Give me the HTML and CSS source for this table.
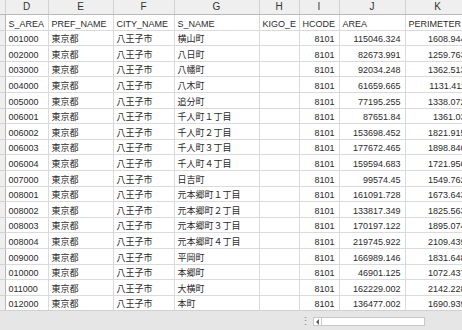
FILE: index.html
```html
<!DOCTYPE html>
<html lang="ja">
<head>
<meta charset="utf-8">
<link rel="stylesheet" href="styles.css">
</head>
<body>
<div class="sheet">
  <div class="grid-wrap">
    <table class="grid">
      <colgroup>
        <col class="c-rh"><col class="c-d"><col class="c-e"><col class="c-f"><col class="c-g"><col class="c-h"><col class="c-i"><col class="c-j"><col class="c-k">
      </colgroup>
      <thead>
        <tr class="colhdr"><th></th><th>D</th><th>E</th><th>F</th><th>G</th><th>H</th><th>I</th><th>J</th><th>K</th></tr>
      </thead>
      <tbody>
        <tr><th></th><td>S_AREA</td><td>PREF_NAME</td><td>CITY_NAME</td><td>S_NAME</td><td>KIGO_E</td><td>HCODE</td><td>AREA</td><td>PERIMETER</td></tr>
        <tr><th></th><td>001000</td><td>東京都</td><td>八王子市</td><td>横山町</td><td></td><td class="n">8101</td><td class="n">115046.324</td><td class="n">1608.944</td></tr>
        <tr><th></th><td>002000</td><td>東京都</td><td>八王子市</td><td>八日町</td><td></td><td class="n">8101</td><td class="n">82673.991</td><td class="n">1259.763</td></tr>
        <tr><th></th><td>003000</td><td>東京都</td><td>八王子市</td><td>八幡町</td><td></td><td class="n">8101</td><td class="n">92034.248</td><td class="n">1362.513</td></tr>
        <tr><th></th><td>004000</td><td>東京都</td><td>八王子市</td><td>八木町</td><td></td><td class="n">8101</td><td class="n">61659.665</td><td class="n">1131.411</td></tr>
        <tr><th></th><td>005000</td><td>東京都</td><td>八王子市</td><td>追分町</td><td></td><td class="n">8101</td><td class="n">77195.255</td><td class="n">1338.072</td></tr>
        <tr><th></th><td>006001</td><td>東京都</td><td>八王子市</td><td>千人町１丁目</td><td></td><td class="n">8101</td><td class="n">87651.84</td><td class="n">1361.03</td></tr>
        <tr><th></th><td>006002</td><td>東京都</td><td>八王子市</td><td>千人町２丁目</td><td></td><td class="n">8101</td><td class="n">153698.452</td><td class="n">1821.915</td></tr>
        <tr><th></th><td>006003</td><td>東京都</td><td>八王子市</td><td>千人町３丁目</td><td></td><td class="n">8101</td><td class="n">177672.465</td><td class="n">1898.846</td></tr>
        <tr><th></th><td>006004</td><td>東京都</td><td>八王子市</td><td>千人町４丁目</td><td></td><td class="n">8101</td><td class="n">159594.683</td><td class="n">1721.956</td></tr>
        <tr><th></th><td>007000</td><td>東京都</td><td>八王子市</td><td>日吉町</td><td></td><td class="n">8101</td><td class="n">99574.45</td><td class="n">1549.762</td></tr>
        <tr><th></th><td>008001</td><td>東京都</td><td>八王子市</td><td>元本郷町１丁目</td><td></td><td class="n">8101</td><td class="n">161091.728</td><td class="n">1673.643</td></tr>
        <tr><th></th><td>008002</td><td>東京都</td><td>八王子市</td><td>元本郷町２丁目</td><td></td><td class="n">8101</td><td class="n">133817.349</td><td class="n">1825.563</td></tr>
        <tr><th></th><td>008003</td><td>東京都</td><td>八王子市</td><td>元本郷町３丁目</td><td></td><td class="n">8101</td><td class="n">170197.122</td><td class="n">1895.074</td></tr>
        <tr><th></th><td>008004</td><td>東京都</td><td>八王子市</td><td>元本郷町４丁目</td><td></td><td class="n">8101</td><td class="n">219745.922</td><td class="n">2109.439</td></tr>
        <tr><th></th><td>009000</td><td>東京都</td><td>八王子市</td><td>平岡町</td><td></td><td class="n">8101</td><td class="n">166989.146</td><td class="n">1831.648</td></tr>
        <tr><th></th><td>010000</td><td>東京都</td><td>八王子市</td><td>本郷町</td><td></td><td class="n">8101</td><td class="n">46901.125</td><td class="n">1072.437</td></tr>
        <tr><th></th><td>011000</td><td>東京都</td><td>八王子市</td><td>大横町</td><td></td><td class="n">8101</td><td class="n">162229.002</td><td class="n">2142.228</td></tr>
        <tr><th></th><td>012000</td><td>東京都</td><td>八王子市</td><td>本町</td><td></td><td class="n">8101</td><td class="n">136477.002</td><td class="n">1690.939</td></tr>
      </tbody>
    </table>
  </div>
  <div class="statusbar">
    <div class="tabs-area"></div>
    <div class="splitter">⋮</div>
    <div class="hscroll">
      <div class="arrow"><svg width="4" height="6" viewBox="0 0 4 6"><path d="M3 0 L0 3 L3 6 Z" fill="#606060"/></svg></div>
      <div class="thumb"></div>
    </div>
  </div>
</div>
</body>
</html>
```

FILE: styles.css
```css
html, body {
  margin: 0;
  padding: 0;
  background: #ffffff;
}
body {
  width: 462px;
  height: 330px;
  overflow: hidden;
  font-family: "Liberation Sans", "Noto Sans CJK JP", sans-serif;
  font-size: 9px;
  color: #2a2a2a;
}
.sheet {
  display: flex;
  flex-direction: column;
  width: 462px;
  height: 330px;
}
.grid-wrap {
  height: 310px;
  overflow: hidden;
  flex: none;
}
.grid {
  table-layout: fixed;
  border-collapse: collapse;
  width: 470px;
}
.c-rh { width: 5px; }
.c-d { width: 43px; }
.c-e { width: 65px; }
.c-f { width: 61px; }
.c-g { width: 85px; }
.c-h { width: 40px; }
.c-i { width: 40px; }
.c-j { width: 66px; }
.c-k { width: 65px; }

.grid th, .grid td {
  padding: 0 3px;
  white-space: nowrap;
  overflow: hidden;
  line-height: 11px;
}
.colhdr th {
  height: 14px;
  background: #efefef;
  border-right: 1px solid #d2d2d2;
  border-bottom: 1px solid #b9b9b9;
  font-weight: normal;
  color: #333;
  text-align: center;
  padding: 0;
  font-size: 10px;
  line-height: 14px;
}
tbody th {
  background: #efefef;
  border-right: 1px solid #b9b9b9;
  border-bottom: 1px solid #d2d2d2;
  padding: 0;
}
tbody td {
  height: 14.6px;
  border-right: 1px solid #dadada;
  border-bottom: 1px solid #dadada;
  text-align: left;
  padding-left: 3px;
  vertical-align: bottom;
}
tbody td.n {
  text-align: right;
  padding-right: 4px;
}

.statusbar {
  flex: 1;
  display: flex;
  align-items: center;
  background: #e6e6e6;
  border-top: 1px solid #d0d0d0;
}
.tabs-area {
  width: 298px;
}
.splitter {
  width: 14px;
  color: #8a8a8a;
  font-size: 11px;
  text-align: center;
  line-height: 12px;
}
.hscroll {
  display: flex;
  align-items: center;
  height: 9px;
  margin-left: 1px;
  margin-top: 2px;
}
.arrow {
  width: 9px;
  height: 9px;
  background: #ffffff;
  border: 1px solid #c8c8c8;
  box-sizing: border-box;
  display: flex;
  align-items: center;
  justify-content: center;
}
.thumb {
  width: 103px;
  height: 9px;
  box-sizing: border-box;
  background: #ffffff;
  border: 1px solid #c8c8c8;
  border-left: none;
}
```
